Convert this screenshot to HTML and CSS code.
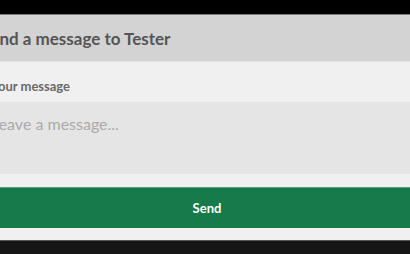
FILE: index.html
```html
<!DOCTYPE html>
<html lang="en">
  <head>
    <meta charset="UTF-8" />
    <title>Send a message</title>
    <link rel="stylesheet" href="styles.css">
  </head>
  <body>
    <div class="topbar"></div>
    <div class="modal">
      <h2 class="modal__title">Send a message to Tester</h2>
      <form class="modal__form">
        <label class="modal__label" for="msg">Your message</label>
        <textarea class="modal__input" id="msg" placeholder="Leave a message..."></textarea>
        <button class="modal__send" type="button">Send</button>
      </form>
    </div>
    <div class="footer"></div>
  </body>
</html>
```

FILE: styles.css
```css
body {
  margin: 0;
  background-color: #f0f0f0;
  font-family: Lato, "Open Sans", sans-serif;
  overflow: hidden;
}

.topbar {
  height: 14px;
  background-color: #000;
  border-bottom: 1px solid #7a7a7a;
}

.modal {
  margin-left: -30px;
  width: 474px;
}

.modal__title {
  margin: 0;
  height: 46px;
  line-height: 48px;
  padding-left: 11px;
  background-color: #d3d3d3;
  border-bottom: 1px solid #e2e2e2;
  color: #555;
  font-size: 17px;
  font-weight: bold;
  white-space: nowrap;
}

.modal__form {
  display: flex;
  flex-direction: column;
}

.modal__label {
  height: 32px;
  padding-top: 8px;
  line-height: 32px;
  padding-left: 21px;
  color: #6a6a6a;
  font-size: 13px;
  font-weight: bold;
}

.modal__input {
  height: 72px;
  box-sizing: border-box;
  border: none;
  resize: none;
  padding: 12px 21px;
  background-color: #e5e5e5;
  font-family: Lato, "Open Sans", sans-serif;
  font-size: 16px;
  color: #555;
}

.modal__input::placeholder {
  color: #aaa;
}

.modal__send {
  margin: 13px 0 12px;
  height: 41px;
  border: none;
  border-top: 1px solid #5a9d7b;
  background-color: #167a4a;
  color: #fff;
  font-family: Lato, "Open Sans", sans-serif;
  font-size: 13px;
  font-weight: bold;
}

.footer {
  height: 14px;
  background-color: #161616;
  border-top: 1px solid #555;
}
```
